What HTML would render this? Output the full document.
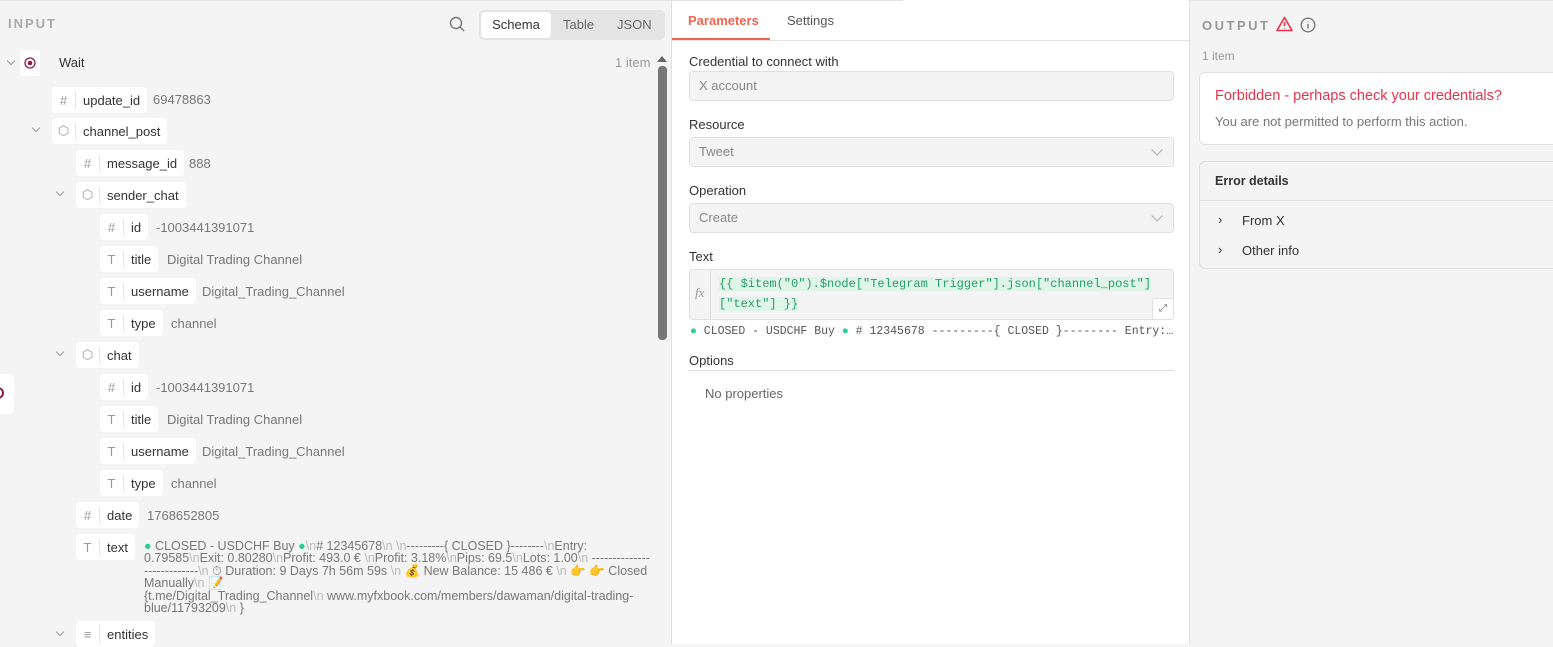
<!DOCTYPE html>
<html><head><meta charset="utf-8"><style>
*{box-sizing:border-box;margin:0;padding:0}
body{width:1553px;height:644px;overflow:hidden;font-family:"Liberation Sans","Noto Sans CJK SC",sans-serif;font-size:13px;color:#333;position:relative;background:#f4f4f4}
.left{position:absolute;left:0;top:0;width:671px;height:644px;background:#f4f4f4;border-top:1px solid #e4e4e4}
.mid{position:absolute;left:671px;top:0;width:519px;height:644px;background:#fff;border-left:1px solid #e0e0e0;border-right:1px solid #e0e0e0}
.right{position:absolute;left:1190px;top:0;width:363px;height:644px;background:#f4f4f4;border-top:1px solid #e4e4e4}
.a{position:absolute}
.pill{position:absolute;height:26px;background:#fff;border-radius:4px;display:flex;align-items:center;color:#333;font-size:13px;white-space:nowrap}
.pill .ic{width:24px;height:18px;border-right:1px solid #e6e6e6;display:flex;align-items:center;justify-content:center;color:#999;font-size:13px}
.pill .lb{padding:0 7px 0 7px}
.val{position:absolute;color:#777;font-size:13px;white-space:nowrap}
.chev{position:absolute;width:6px;height:6px;border-right:1.2px solid #999;border-bottom:1.2px solid #999;transform:rotate(45deg)}
.lbl{position:absolute;left:17px;font-size:13px;color:#333}
.inp{position:absolute;left:17px;width:485px;height:30px;background:#f4f4f4;border:1px solid #e0e0e0;border-radius:4px;color:#888;padding-left:9px;line-height:28px}
.dd{position:absolute;right:12px;top:8px;width:8px;height:8px;border-right:1.3px solid #aaa;border-bottom:1.3px solid #aaa;transform:rotate(45deg)}
.mono{font-family:"Liberation Mono",monospace}
.n{color:#bbb}
</style></head><body>
<div class="left">
 <div class="a" style="left:8px;top:15px;font-size:13px;letter-spacing:2px;color:#aaa;font-weight:bold">INPUT</div>
 <svg class="a" style="left:449px;top:15px" width="16" height="16" viewBox="0 0 16 16"><circle cx="7" cy="7" r="5.5" fill="none" stroke="#777" stroke-width="1.4"/><path d="M11 11l4 4" stroke="#777" stroke-width="1.4"/></svg>
 <div class="a" style="left:479px;top:9px;width:186px;height:30px;background:#e4e4e4;border-radius:5px"></div>
 <div class="a" style="left:481px;top:11px;width:70px;height:26px;background:#fff;border-radius:4px;text-align:center;line-height:26px;color:#333">Schema</div>
 <div class="a" style="left:563px;top:16px;color:#666">Table</div>
 <div class="a" style="left:617px;top:16px;color:#666">JSON</div>
 <div class="a" style="left:657px;top:55px;width:0;height:0;border-left:5px solid transparent;border-right:5px solid transparent;border-bottom:6px solid #666"></div>
 <div class="a" style="left:658px;top:65px;width:9px;height:274px;background:#777;border-radius:4px"></div>
 <div class="a" style="left:-20px;top:373px;width:34px;height:40px;background:#fff;border-radius:5px"></div>
 <div class="a" style="left:-8px;top:386px;width:12px;height:12px;border:2px solid #8b2040;border-radius:50%"></div>

 <div class="chev" style="left:8px;top:57px"></div>
 <div class="pill" style="left:20px;top:49px;width:20px;height:26px;justify-content:center"><svg width="12" height="12"><circle cx="6" cy="6" r="5" fill="none" stroke="#8b2040" stroke-width="1.3"/><circle cx="6" cy="6" r="2.3" fill="#8b2040"/></svg></div>
 <div class="a" style="left:59px;top:54px;font-size:13px">Wait</div>
 <div class="val" style="left:615px;top:54px;color:#999">1 item</div>

 <div class="pill" style="left:52px;top:86px"><span class="ic">#</span><span class="lb">update_id</span></div><div class="val" style="left:153px;top:91px">69478863</div>
 <div class="chev" style="left:33px;top:124px"></div>
 <div class="pill" style="left:52px;top:117px"><span class="ic">⬡</span><span class="lb">channel_post</span></div>
 <div class="pill" style="left:76px;top:149px"><span class="ic">#</span><span class="lb">message_id</span></div><div class="val" style="left:189px;top:155px">888</div>
 <div class="chev" style="left:57px;top:188px"></div>
 <div class="pill" style="left:76px;top:181px"><span class="ic">⬡</span><span class="lb">sender_chat</span></div>
 <div class="pill" style="left:100px;top:213px"><span class="ic">#</span><span class="lb">id</span></div><div class="val" style="left:156px;top:219px">-1003441391071</div>
 <div class="pill" style="left:100px;top:245px"><span class="ic">T</span><span class="lb">title</span></div><div class="val" style="left:167px;top:251px">Digital Trading Channel</div>
 <div class="pill" style="left:100px;top:277px"><span class="ic">T</span><span class="lb">username</span></div><div class="val" style="left:202px;top:283px">Digital_Trading_Channel</div>
 <div class="pill" style="left:100px;top:309px"><span class="ic">T</span><span class="lb">type</span></div><div class="val" style="left:171px;top:315px">channel</div>
 <div class="chev" style="left:57px;top:348px"></div>
 <div class="pill" style="left:76px;top:341px"><span class="ic">⬡</span><span class="lb">chat</span></div>
 <div class="pill" style="left:100px;top:373px"><span class="ic">#</span><span class="lb">id</span></div><div class="val" style="left:156px;top:379px">-1003441391071</div>
 <div class="pill" style="left:100px;top:405px"><span class="ic">T</span><span class="lb">title</span></div><div class="val" style="left:167px;top:411px">Digital Trading Channel</div>
 <div class="pill" style="left:100px;top:437px"><span class="ic">T</span><span class="lb">username</span></div><div class="val" style="left:202px;top:443px">Digital_Trading_Channel</div>
 <div class="pill" style="left:100px;top:469px"><span class="ic">T</span><span class="lb">type</span></div><div class="val" style="left:171px;top:475px">channel</div>
 <div class="pill" style="left:76px;top:501px"><span class="ic">#</span><span class="lb">date</span></div><div class="val" style="left:147px;top:507px">1768652805</div>
 <div class="pill" style="left:76px;top:533px"><span class="ic">T</span><span class="lb">text</span></div>
 <div class="val" style="left:144px;top:539px;width:506px;white-space:normal;line-height:12.4px;font-size:12.5px"><span style="color:#3c9">●</span> CLOSED - USDCHF Buy <span style="color:#3c9">●</span><span class="n">\n</span># 12345678<span class="n">\n \n</span>---------{ CLOSED }--------<span class="n">\n</span>Entry: 0.79585<span class="n">\n</span>Exit: 0.80280<span class="n">\n</span>Profit: 493.0 € <span class="n">\n</span>Profit: 3.18%<span class="n">\n</span>Pips: 69.5<span class="n">\n</span>Lots: 1.00<span class="n">\n</span> ---------------------------<span class="n">\n</span> ⏱ Duration: 9 Days 7h 56m 59s <span class="n">\n</span> 💰 New Balance: 15 486 € <span class="n">\n</span> 👉 👉 Closed Manually<span class="n">\n</span> 📝<br>{t.me/Digital_Trading_Channel<span class="n">\n</span> www.myfxbook.com/members/dawaman/digital-trading-blue/11793209<span class="n">\n</span> }</div>
 <div class="chev" style="left:57px;top:628px"></div>
 <div class="pill" style="left:76px;top:620px"><span class="ic">≡</span><span class="lb">entities</span></div>
</div>

<div class="mid">
 <div class="a" style="left:0;top:0;width:231px;height:1px;background:#e4e4e4"></div>
 <div class="a" style="left:16px;top:13px;color:#f0654e;font-weight:bold">Parameters</div>
 <div class="a" style="left:115px;top:13px;color:#555">Settings</div>
 <div class="a" style="left:0;top:40px;width:517px;height:1px;background:#e4e4e4"></div>
 <div class="a" style="left:0;top:38px;width:98px;height:2px;background:#f0654e"></div>
 <div class="lbl" style="top:54px">Credential to connect with</div>
 <div class="inp" style="top:71px">X account</div>
 <div class="lbl" style="top:117px">Resource</div>
 <div class="inp" style="top:137px">Tweet<div class="dd"></div></div>
 <div class="lbl" style="top:183px">Operation</div>
 <div class="inp" style="top:203px">Create<div class="dd"></div></div>
 <div class="lbl" style="top:249px">Text</div>
 <div class="a" style="left:17px;top:269px;width:485px;height:51px;background:#f4f4f4;border:1px solid #e0e0e0;border-radius:4px"></div>
 <div class="a" style="left:38px;top:270px;width:1px;height:49px;background:#e0e0e0"></div>
 <div class="a" style="left:23px;top:285px;font-family:'Liberation Serif',serif;font-style:italic;color:#999;font-size:13px">fx</div>
 <div class="a mono" style="left:47px;top:274px;font-size:12px;line-height:20px;color:#2a9d6a;white-space:pre"><span style="background:#dff5e8">{{ $item("0").$node["Telegram Trigger"].json["channel_post"]</span>
<span style="background:#dff5e8">["text"] }}</span></div>
 <div class="a" style="left:480px;top:298px;width:22px;height:22px;background:#fff;border:1px solid #e0e0e0;border-radius:3px;font-size:10px;color:#666;text-align:center;line-height:20px">⤢</div>
 <div class="a mono" style="left:18px;top:325px;font-size:11.5px;color:#555;white-space:nowrap"><span style="color:#3c9">●</span> CLOSED - USDCHF Buy <span style="color:#3c9">●</span> # 12345678 ---------{ CLOSED }-------- Entry:…</div>
 <div class="lbl" style="top:353px">Options</div>
 <div class="a" style="left:17px;top:370px;width:485px;height:1px;background:#ddd"></div>
 <div class="a" style="left:33px;top:386px;color:#666">No properties</div>
</div>

<div class="right">
 <div class="a" style="left:12px;top:17px;font-size:13px;letter-spacing:2.5px;color:#999;font-weight:bold">OUTPUT</div>
 <svg class="a" style="left:86px;top:15px" width="17" height="16" viewBox="0 0 17 16"><path d="M8.5 1.5L16 14.5H1Z" fill="none" stroke="#e8344e" stroke-width="1.6" stroke-linejoin="round"/><path d="M8.5 6v4M8.5 11.8v.6" stroke="#e8344e" stroke-width="1.6"/></svg>
 <svg class="a" style="left:110px;top:16px" width="16" height="16" viewBox="0 0 16 16"><circle cx="8" cy="8" r="6.8" fill="none" stroke="#777" stroke-width="1.3"/><path d="M8 7v4.5M8 4.5v.8" stroke="#777" stroke-width="1.4"/></svg>
 <div class="a" style="left:12px;top:48px;color:#999;font-size:12px">1 item</div>
 <div class="a" style="left:9px;top:71px;width:360px;height:73px;background:#fff;border:1px solid #e0e0e0;border-radius:6px"></div>
 <div class="a" style="left:25px;top:87px;color:#e8344e;font-size:14.5px">Forbidden - perhaps check your credentials?</div>
 <div class="a" style="left:25px;top:113px;color:#777">You are not permitted to perform this action.</div>
 <div class="a" style="left:9px;top:160px;width:360px;height:108px;border:1px solid #e0e0e0;border-radius:6px"></div>
 <div class="a" style="left:9px;top:199px;width:360px;height:1px;background:#e0e0e0"></div>
 <div class="a" style="left:25px;top:173px;font-weight:bold;font-size:12.5px;color:#333">Error details</div>
 <div class="a" style="left:28px;top:211px;color:#333">›</div><div class="a" style="left:52px;top:212px;color:#333">From X</div>
 <div class="a" style="left:28px;top:241px;color:#333">›</div><div class="a" style="left:52px;top:242px;color:#333">Other info</div>
</div>
</body></html>
